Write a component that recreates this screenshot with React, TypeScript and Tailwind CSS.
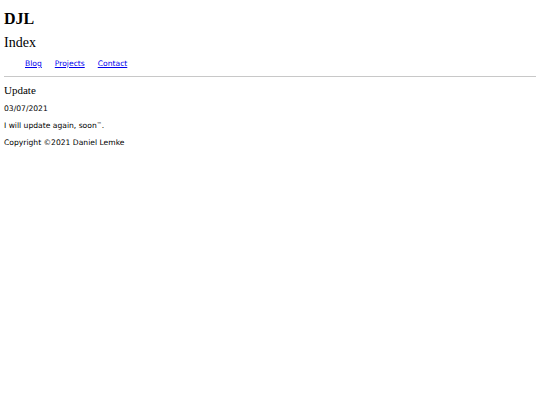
import React from "react";

function App() {
  return (
    <div className="min-h-[405px] bg-white px-[4px] text-black" style={{ fontFamily: '"DejaVu Sans", sans-serif' }}>
      <header className="pt-[9px]">
        <h1 className="font-['Liberation_Serif',serif] text-[16px] font-bold leading-[20px]">DJL</h1>
        <h2 className="mt-[6px] font-['Liberation_Serif',serif] text-[14px] leading-[16px]">Index</h2>
        <nav className="mt-[8px] pl-[21px]">
          <ul className="flex gap-[13px] text-[7.6px] leading-[10px]">
            <li>
              <a href="#" className="text-[#0000ee] underline">Blog</a>
            </li>
            <li>
              <a href="#" className="text-[#0000ee] underline">Projects</a>
            </li>
            <li>
              <a href="#" className="text-[#0000ee] underline">Contact</a>
            </li>
          </ul>
        </nav>
      </header>

      <hr className="mt-[7px] border-t border-[#c8c8c8]" />

      <main>
        <h3 className="mt-[7px] font-['Liberation_Serif',serif] text-[11px] font-normal leading-[12px]">Update</h3>
        <p className="mt-[8px] text-[7.6px] leading-[10px]">03/07/2021</p>
        <p className="mt-[7px] text-[7.6px] leading-[10px]">
          I will update again, soon<sup className="text-[5px]">™</sup>.
        </p>
      </main>

      <footer>
        <p className="mt-[7px] text-[7.6px] leading-[10px]">Copyright ©2021 Daniel Lemke</p>
      </footer>
    </div>
  );
}

export default App;
